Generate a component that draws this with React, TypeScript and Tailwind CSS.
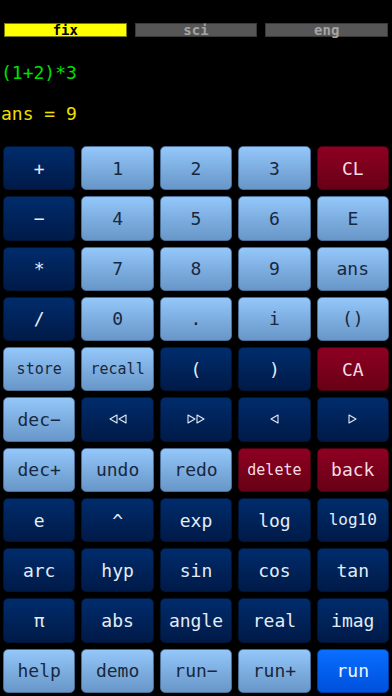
import React from "react";

type Kind = "d" | "l" | "r" | "b";
type Btn = { t: React.ReactNode; k: Kind; s?: string };

const Tri = ({ dir }: { dir: "l" | "r" }) => (
  <svg width="9" height="10" viewBox="0 0 9 10" className="block">
    {dir === "l" ? (
      <polygon points="8,1 1,5 8,9" fill="none" stroke="currentColor" strokeWidth="1.1" strokeLinejoin="round" />
    ) : (
      <polygon points="1,1 8,5 1,9" fill="none" stroke="currentColor" strokeWidth="1.1" strokeLinejoin="round" />
    )}
  </svg>
);

const rows: Btn[][] = [
  [{ t: "+", k: "d" }, { t: "1", k: "l" }, { t: "2", k: "l" }, { t: "3", k: "l" }, { t: "CL", k: "r" }],
  [{ t: "−", k: "d" }, { t: "4", k: "l" }, { t: "5", k: "l" }, { t: "6", k: "l" }, { t: "E", k: "l" }],
  [{ t: "*", k: "d" }, { t: "7", k: "l" }, { t: "8", k: "l" }, { t: "9", k: "l" }, { t: "ans", k: "l" }],
  [{ t: "/", k: "d" }, { t: "0", k: "l" }, { t: ".", k: "l" }, { t: "i", k: "l" }, { t: "()", k: "l" }],
  [{ t: "store", k: "l", s: "text-[15px]" }, { t: "recall", k: "l", s: "text-[15px]" }, { t: "(", k: "d" }, { t: ")", k: "d" }, { t: "CA", k: "r" }],
  [
    { t: "dec−", k: "l" },
    { t: <span className="flex"><Tri dir="l" /><Tri dir="l" /></span>, k: "d" },
    { t: <span className="flex"><Tri dir="r" /><Tri dir="r" /></span>, k: "d" },
    { t: <Tri dir="l" />, k: "d" },
    { t: <Tri dir="r" />, k: "d" },
  ],
  [{ t: "dec+", k: "l" }, { t: "undo", k: "l" }, { t: "redo", k: "l" }, { t: "delete", k: "r", s: "text-[15px]" }, { t: "back", k: "r" }],
  [{ t: "e", k: "d" }, { t: "^", k: "d" }, { t: "exp", k: "d" }, { t: "log", k: "d" }, { t: "log10", k: "d", s: "text-[16px]" }],
  [{ t: "arc", k: "d" }, { t: "hyp", k: "d" }, { t: "sin", k: "d" }, { t: "cos", k: "d" }, { t: "tan", k: "d" }],
  [{ t: "π", k: "d" }, { t: "abs", k: "d" }, { t: "angle", k: "d" }, { t: "real", k: "d" }, { t: "imag", k: "d" }],
  [{ t: "help", k: "l" }, { t: "demo", k: "l" }, { t: "run−", k: "l" }, { t: "run+", k: "l" }, { t: "run", k: "b" }],
];

const kindCls: Record<Kind, string> = {
  d: "bg-gradient-to-b from-[#002c6c] to-[#001a48] text-[#e4ecf6] border-[#001436]",
  l: "bg-gradient-to-b from-[#94c7fa] to-[#6896c8] text-[#18283e] border-[#4a6e96]",
  r: "bg-gradient-to-b from-[#8e0022] to-[#680016] text-[#f4dce2] border-[#4a0010]",
  b: "bg-gradient-to-b from-[#0a6eff] to-[#0050dc] text-[#f0f6ff] border-[#003a9e]",
};

export default function App() {
  const mono = { fontFamily: '"DejaVu Sans Mono", "Liberation Mono", monospace' };
  return (
    <div className="w-[392px] h-[696px] bg-black overflow-hidden flex flex-col" style={mono}>
      <div className="mt-[23px] h-[14px] px-[4px] flex gap-[8px]">
        <div className="flex-1 bg-[#ffff00] border border-[#7a7a00] flex items-center justify-center text-black text-[14px] font-bold leading-none">
          fix
        </div>
        <div className="flex-1 bg-[#565656] border border-[#3a3a3a] flex items-center justify-center text-[#a4a4a4] text-[14px] font-bold leading-none">
          sci
        </div>
        <div className="flex-1 bg-[#565656] border border-[#3a3a3a] flex items-center justify-center text-[#a4a4a4] text-[14px] font-bold leading-none">
          eng
        </div>
      </div>
      <div className="mt-[25px] h-[22px] leading-[22px] text-[18px] text-[#00e000] pl-[1px]">(1+2)*3</div>
      <div className="mt-[19px] h-[22px] leading-[22px] text-[18px] text-[#f0e000] pl-[1px]">ans = 9</div>
      <div className="mt-[21px] h-[547px] px-[3px] grid grid-cols-5 grid-rows-[repeat(11,minmax(0,1fr))] gap-x-[6px] gap-y-[6px]">
        {rows.flat().map((b, i) => (
          <div
            key={i}
            className={`rounded-[5px] border flex items-center justify-center ${kindCls[b.k]} ${b.s ?? "text-[18px]"}`}
          >
            {b.t}
          </div>
        ))}
      </div>
    </div>
  );
}
